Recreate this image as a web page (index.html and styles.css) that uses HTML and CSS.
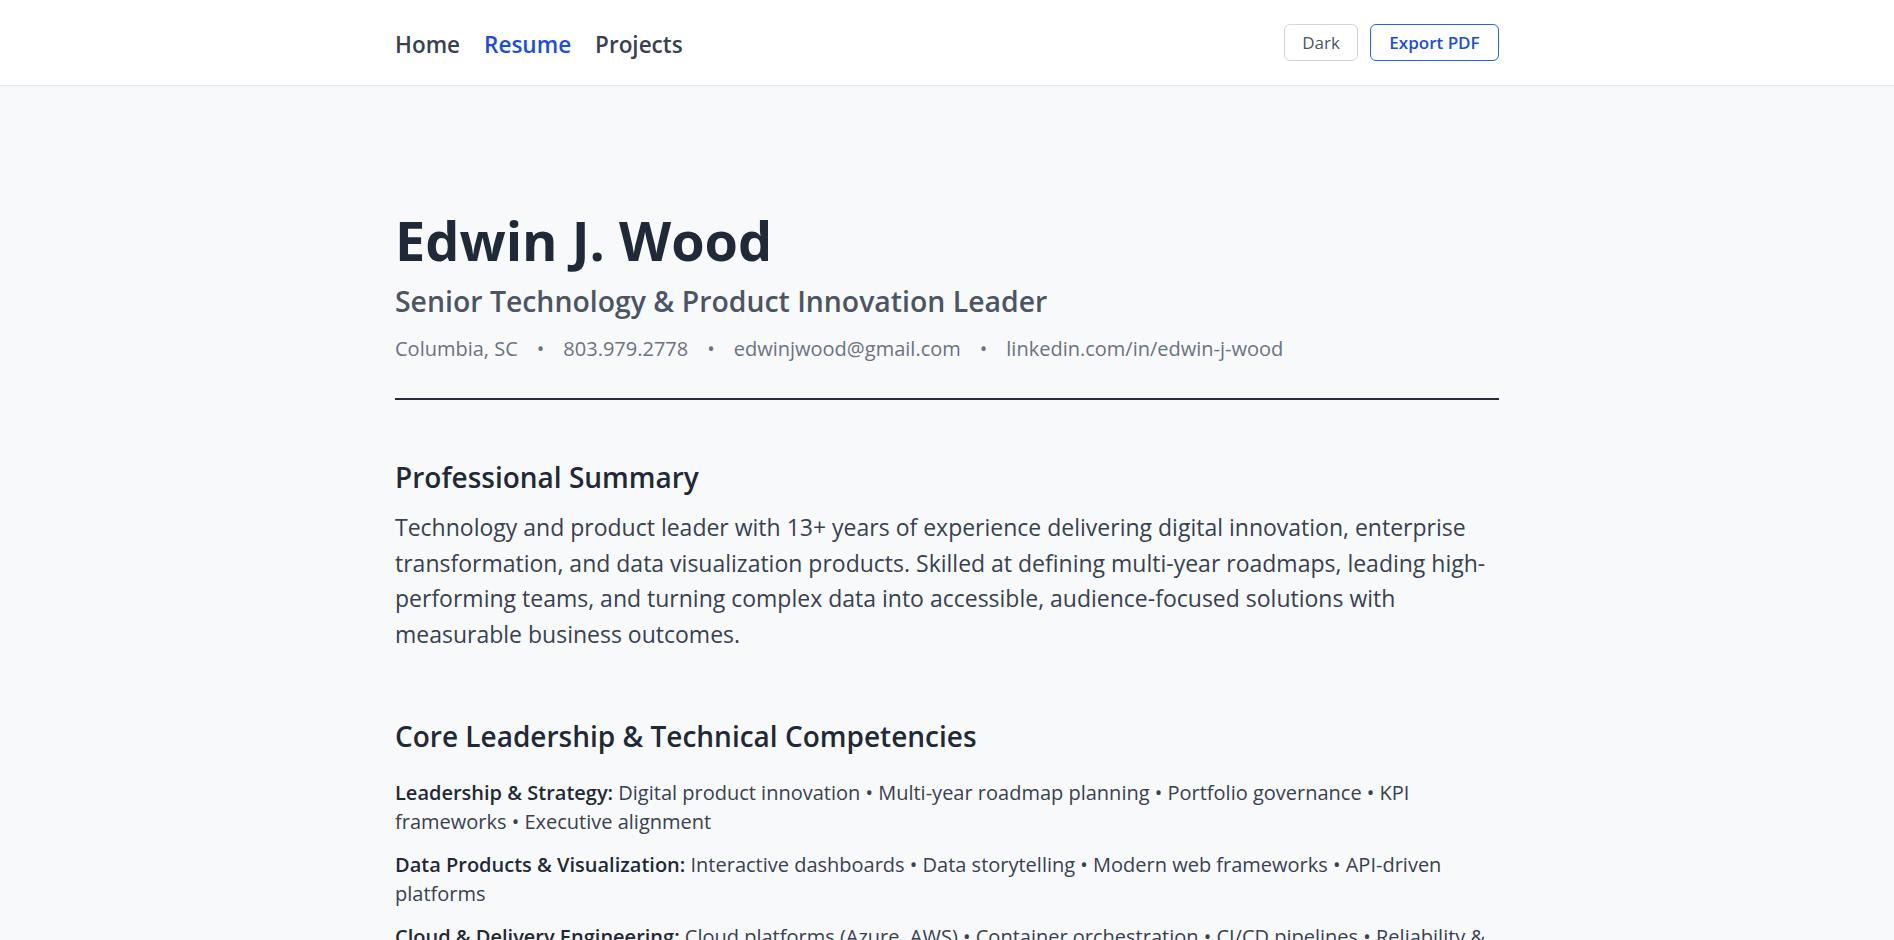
FILE: index.html
```html
<!DOCTYPE html>
<html lang="en">
<head>
<meta charset="utf-8">
<title>Resume — Edwin J. Wood</title>
<link rel="stylesheet" href="styles.css">
</head>
<body>
<header class="topbar">
  <div class="topbar-inner">
    <nav class="nav">
      <a class="nav-link" href="#">Home</a>
      <a class="nav-link active" href="#">Resume</a>
      <a class="nav-link" href="#">Projects</a>
    </nav>
    <div class="actions">
      <button class="btn btn-ghost">Dark</button>
      <button class="btn btn-primary">Export PDF</button>
    </div>
  </div>
</header>
<main class="page">
  <section class="hero">
    <h1 class="name">Edwin J. Wood</h1>
    <h2 class="title">Senior Technology &amp; Product Innovation Leader</h2>
    <p class="contact">
      <span>Columbia, SC</span><span class="sep">•</span><span>803.979.2778</span><span class="sep">•</span><span>edwinjwood@gmail.com</span><span class="sep">•</span><span>linkedin.com/in/edwin-j-wood</span>
    </p>
  </section>
  <section class="section section-summary">
    <h3 class="section-title">Professional Summary</h3>
    <p class="summary">Technology and product leader with 13+ years of experience delivering digital innovation, enterprise transformation, and data visualization products. Skilled at defining multi-year roadmaps, leading high-performing teams, and turning complex data into accessible, audience-focused solutions with measurable business outcomes.</p>
  </section>
  <section class="section section-skills">
    <h3 class="section-title">Core Leadership &amp; Technical Competencies</h3>
    <p class="skill"><strong>Leadership &amp; Strategy:</strong> Digital product innovation • Multi-year roadmap planning • Portfolio governance • KPI frameworks • Executive alignment</p>
    <p class="skill"><strong>Data Products &amp; Visualization:</strong> Interactive dashboards • Data storytelling • Modern web frameworks • API-driven platforms</p>
    <p class="skill"><strong>Cloud &amp; Delivery Engineering:</strong> Cloud platforms (Azure, AWS) • Container orchestration • CI/CD pipelines • Reliability &amp; observability</p>
  </section>
</main>
</body>
</html>
```

FILE: styles.css
```css
* { box-sizing: border-box; }
html, body { margin: 0; padding: 0; }
body {
  background: #f8f9fb;
  font-family: "Segoe UI", "Open Sans", "Noto Sans", sans-serif;
  color: #374151;
}
.topbar {
  background: #ffffff;
  height: 86px;
  border-bottom: 1px solid #e5e7eb;
  box-shadow: 0 1px 3px rgba(0,0,0,0.05);
}
.topbar-inner {
  width: 1104px;
  margin: 0 auto;
  height: 100%;
  display: flex;
  align-items: center;
  justify-content: space-between;
}
.nav { display: flex; gap: 24px; padding-top: 3px; }
.nav-link {
  font-size: 22.5px;
  font-weight: 600;
  color: #374151;
  text-decoration: none;
}
.nav-link.active { color: #1d4ed8; }
.actions { display: flex; gap: 12px; }
.btn {
  font-family: inherit;
  height: 37px;
  border-radius: 6px;
  font-size: 17px;
  background: #fff;
  cursor: pointer;
  padding: 0;
}
.btn-ghost {
  width: 74px;
  border: 1px solid #d1d5db;
  color: #4b5563;
}
.btn-primary {
  width: 129px;
  border: 1px solid #2563eb;
  color: #1d4ed8;
  font-weight: 600;
}
.page {
  width: 1104px;
  margin: 0 auto;
  padding-top: 122px;
}
.hero {
  border-bottom: 2px solid #262c36;
  padding-bottom: 35px;
}
.name {
  margin: 0;
  font-size: 54px;
  line-height: 64px;
  font-weight: 700;
  color: #1f2937;
}
.title {
  margin: 11px 0 0;
  font-size: 28.4px;
  line-height: 36px;
  font-weight: 600;
  color: #4b5563;
}
.contact {
  margin: 16px 0 0;
  font-size: 20px;
  line-height: 28px;
  color: #6b7280;
}
.sep { margin: 0 19px; }
.section-summary { margin-top: 59px; }
.section-skills { margin-top: 66px; }
.section-title {
  margin: 0;
  font-size: 28px;
  line-height: 36px;
  font-weight: 600;
  color: #1f2937;
}
.summary {
  margin: 15px 0 0;
  font-size: 23px;
  line-height: 35.6px;
  color: #374151;
}
.section-skills .section-title { margin-bottom: 24px; }
.skill {
  margin: 0 0 14px;
  font-size: 20px;
  line-height: 29px;
  color: #374151;
}
.skill strong { color: #1f2937; font-weight: 600; }
```
